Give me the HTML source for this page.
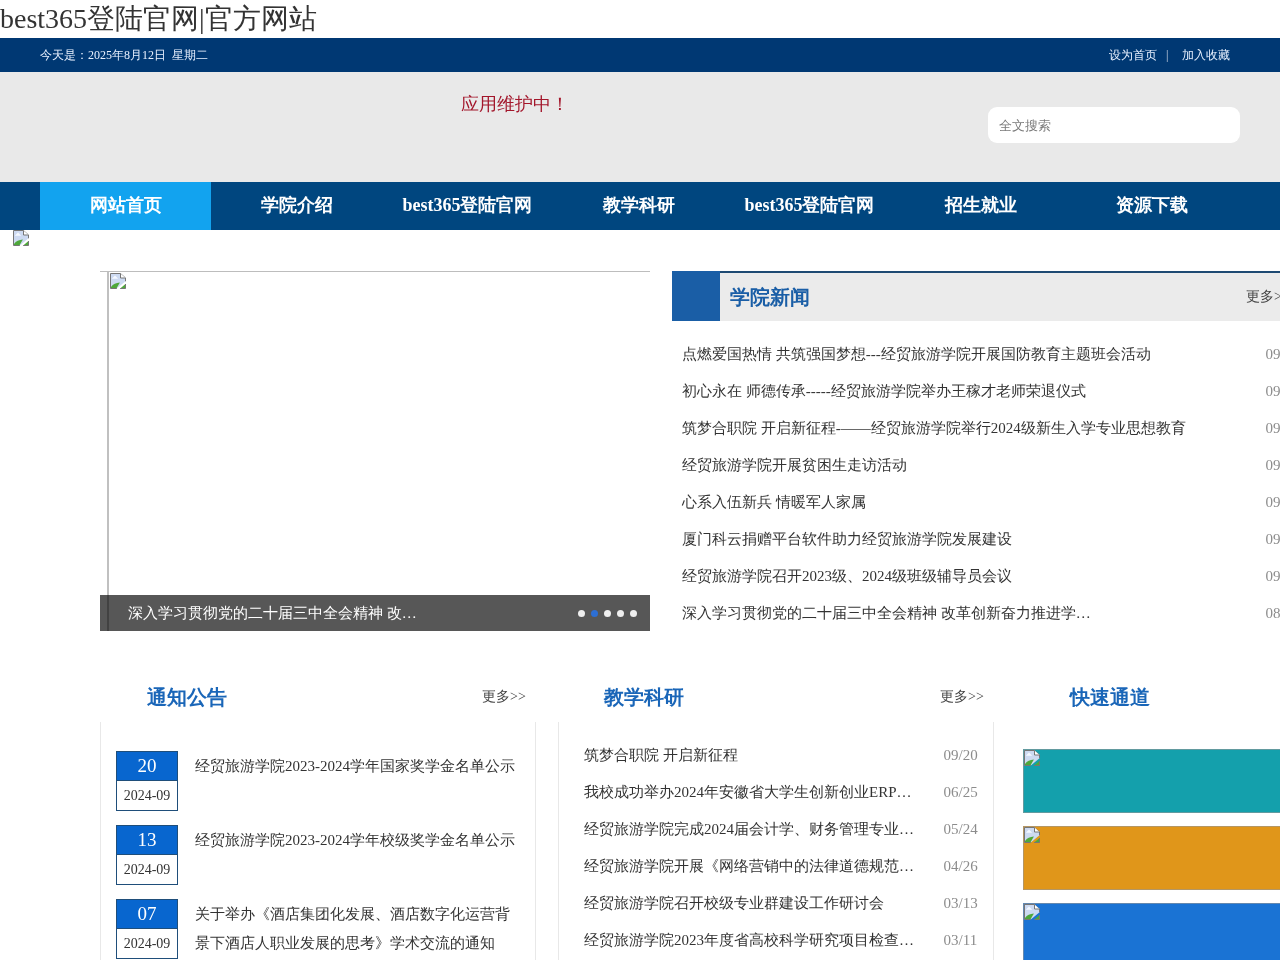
<!DOCTYPE html>
<html><head><meta charset="utf-8">
<style>
*{margin:0;padding:0;box-sizing:border-box}
html,body{width:1280px;height:960px;overflow:hidden;background:#fff}body{will-change:transform}
body{font-family:"Liberation Serif",serif;color:#333;position:relative}
.abs{position:absolute}
.title{left:0;top:0;font-size:28px;line-height:38px;color:#333;white-space:nowrap}
.topbar{left:0;top:38px;width:1280px;height:34px;background:#003873}
.topbar .l{position:absolute;left:40px;top:0;line-height:34px;font-size:12px;color:#e8f1ff}
.topbar .r{position:absolute;right:50px;top:0;line-height:34px;font-size:12px;color:#e8f1ff}
.head{left:0;top:72px;width:1280px;height:110px;background:#e9e9e9}
.maint{left:461px;top:92px;font-size:18px;line-height:24px;color:#a3162b}
.search{left:988px;top:107px;width:252px;height:36px;background:#fff;border-radius:9px}
.search span{position:absolute;left:11px;top:1px;line-height:36px;font-size:13px;color:#7a7a7a}
.nav{left:0;top:182px;width:1280px;height:48px;background:#00467f}
.nav a{position:absolute;top:0;height:48px;width:171px;line-height:47px;text-align:center;color:#fff;font-size:18px;font-weight:bold;text-decoration:none}
.nav a.on{background:#12a3ef}

.bimg{position:absolute;width:16px;height:16px}
.sl-top{left:100px;top:271px;width:550px;height:1px;background:#bdbdbd}
.sl-vl{left:107px;top:272px;width:2px;height:359px;background:#c0c0c0}
.cap{left:100px;top:595px;width:550px;height:36px;background:rgba(0,0,0,.66)}
.cap span{position:absolute;left:28px;top:0;line-height:36px;font-size:15px;color:#fff;white-space:nowrap}
.dot{position:absolute;top:15px;width:7px;height:7px;border-radius:50%;background:#efefef}
.nh{left:672px;top:271px;width:608px;height:50px;background:#ebebeb;border-top:2px solid #1e4a73}
.nh .sq{position:absolute;left:0;top:-2px;width:48px;height:50px;background:#1a5ea6}
.nh .t{position:absolute;left:58px;top:0;line-height:48px;font-size:20px;font-weight:bold;color:#1a5ea6}
.nh .m{position:absolute;left:574px;top:0;line-height:48px;font-size:14px;color:#444;white-space:nowrap}
.nl{left:682px;top:336px;width:600px}
.nl li{list-style:none;height:37px;line-height:37px;font-size:15px;color:#333;white-space:nowrap;position:relative}
.nl li i{font-style:normal;position:absolute;left:583.5px;top:0;color:#8c8c8c}
.st{position:absolute;font-size:20px;font-weight:bold;color:#1a66b8;line-height:30px;white-space:nowrap}
.more{position:absolute;font-size:14px;color:#444;line-height:20px;white-space:nowrap}
.bx{position:absolute;top:722px;height:260px;border-left:1px solid #e8e8e8;border-right:1px solid #e8e8e8}
.db{position:absolute;left:116px;width:62px;height:60px;border:1px solid #1f4e7a;background:#fff}
.db .d{height:29px;background:#0866cf;color:#fff;font-size:19px;line-height:27px;text-align:center;border-bottom:1px solid #1f4e7a}
.db .y{font-size:14px;line-height:30px;text-align:center;color:#333}
.nt{position:absolute;left:195px;width:320px;font-size:15px;line-height:29px;padding-top:1px;color:#333}
.rl{left:584px;top:737px;width:400px}
.rl li{list-style:none;height:37px;line-height:37px;font-size:15px;color:#333;white-space:nowrap;position:relative}
.rl li i{font-style:normal;position:absolute;left:359.6px;top:0;color:#8c8c8c}
.qk{position:absolute;left:1023px;width:300px;height:64px;border:1px solid rgba(150,150,150,.6)}
</style></head><body>
<div class="abs title">best365登陆官网|官方网站</div>
<div class="abs topbar"><div class="l">今天是：2025年8月12日&nbsp; 星期二</div><div class="r" style="right:auto;left:1109px">设为首页</div><div class="r" style="right:auto;left:1166px;color:#cfd8e6">|</div><div class="r" style="right:auto;left:1182px">加入收藏</div></div>
<div class="abs head"></div>
<div class="abs maint">应用维护中！</div>
<div class="abs search"><span>全文搜索</span></div>
<div class="abs nav">
<a class="on" style="left:40px">网站首页</a>
<a style="left:211px">学院介绍</a>
<a style="left:382px">best365登陆官网</a>
<a style="left:553px">教学科研</a>
<a style="left:724px">best365登陆官网</a>
<a style="left:895px">招生就业</a>
<a style="left:1066px">资源下载</a>
</div>

<svg class="bimg" style="left:13px;top:230px" viewBox="0 0 16 16"><path d="M0.5 0.5H10.5L15.5 5V8.3L6.8 15.5H0.5Z" fill="#cddaf2"/><path d="M1.8 5.8L5 2.6L8.2 5.8Z" fill="#f4f8ff"/><path d="M1 15.5V14C3 11 6 9.8 9.9 9.5L6.4 15.5Z" fill="#4ea83a"/><path d="M6.8 15.5H0.5V0.5H10.5L15.5 5V8.3" fill="none" stroke="#767676"/><path d="M10.5 0.5V5H15.5" fill="#fff" stroke="#767676"/><path d="M15.5 11V15.5H10.2Z" fill="#4ea83a"/><path d="M15.5 11V15.5H10.2" fill="none" stroke="#767676"/></svg>
<div class="abs sl-top"></div>
<div class="abs sl-vl"></div>
<svg class="bimg" style="left:110px;top:273px" viewBox="0 0 16 16"><path d="M0.5 0.5H10.5L15.5 5V8.3L6.8 15.5H0.5Z" fill="#cddaf2"/><path d="M1.8 5.8L5 2.6L8.2 5.8Z" fill="#f4f8ff"/><path d="M1 15.5V14C3 11 6 9.8 9.9 9.5L6.4 15.5Z" fill="#4ea83a"/><path d="M6.8 15.5H0.5V0.5H10.5L15.5 5V8.3" fill="none" stroke="#767676"/><path d="M10.5 0.5V5H15.5" fill="#fff" stroke="#767676"/><path d="M15.5 11V15.5H10.2Z" fill="#4ea83a"/><path d="M15.5 11V15.5H10.2" fill="none" stroke="#767676"/></svg>
<div class="abs cap"><span>深入学习贯彻党的二十届三中全会精神 改…</span>
<b class="dot" style="left:478px"></b><b class="dot" style="left:491px;background:#2d6fd4"></b><b class="dot" style="left:504px"></b><b class="dot" style="left:517px"></b><b class="dot" style="left:530px"></b></div>
<div class="abs nh"><div class="sq"></div><div class="t">学院新闻</div><div class="m">更多&gt;&gt;</div></div>
<ul class="abs nl">
<li>点燃爱国热情 共筑强国梦想---经贸旅游学院开展国防教育主题班会活动<i>09-29</i></li>
<li>初心永在 师德传承-----经贸旅游学院举办王稼才老师荣退仪式<i>09-26</i></li>
<li>筑梦合职院 开启新征程-——经贸旅游学院举行2024级新生入学专业思想教育<i>09-20</i></li>
<li>经贸旅游学院开展贫困生走访活动<i>09-18</i></li>
<li>心系入伍新兵 情暖军人家属<i>09-14</i></li>
<li>厦门科云捐赠平台软件助力经贸旅游学院发展建设<i>09-10</i></li>
<li>经贸旅游学院召开2023级、2024级班级辅导员会议<i>09-05</i></li>
<li>深入学习贯彻党的二十届三中全会精神 改革创新奋力推进学…<i>08-30</i></li>
</ul>
<div class="st" style="left:147px;top:682px">通知公告</div>
<div class="more" style="left:482px;top:687px">更多&gt;&gt;</div>
<div class="bx" style="left:100px;width:436px"></div>
<div class="db" style="top:751px"><div class="d">20</div><div class="y">2024-09</div></div>
<div class="nt" style="top:751px">经贸旅游学院2023-2024学年国家奖学金名单公示</div>
<div class="db" style="top:825px"><div class="d">13</div><div class="y">2024-09</div></div>
<div class="nt" style="top:825px">经贸旅游学院2023-2024学年校级奖学金名单公示</div>
<div class="db" style="top:899px"><div class="d">07</div><div class="y">2024-09</div></div>
<div class="nt" style="top:899px">关于举办《酒店集团化发展、酒店数字化运营背景下酒店人职业发展的思考》学术交流的通知</div>
<div class="st" style="left:604px;top:682px">教学科研</div>
<div class="more" style="left:940px;top:687px">更多&gt;&gt;</div>
<div class="bx" style="left:558px;width:436px"></div>
<ul class="abs rl">
<li>筑梦合职院 开启新征程<i>09/20</i></li>
<li>我校成功举办2024年安徽省大学生创新创业ERP…<i>06/25</i></li>
<li>经贸旅游学院完成2024届会计学、财务管理专业…<i>05/24</i></li>
<li>经贸旅游学院开展《网络营销中的法律道德规范…<i>04/26</i></li>
<li>经贸旅游学院召开校级专业群建设工作研讨会<i>03/13</i></li>
<li>经贸旅游学院2023年度省高校科学研究项目检查…<i>03/11</i></li>
</ul>
<div class="st" style="left:1070px;top:682px">快速通道</div>
<div class="qk" style="top:749px;background:#14a0ac"></div>
<div class="qk" style="top:826px;background:#e0961a"></div>
<div class="qk" style="top:903px;background:#1a73d4"></div>
<svg class="bimg" style="left:1024px;top:750px" viewBox="0 0 16 16"><path d="M0.5 0.5H10.5L15.5 5V8.3L6.8 15.5H0.5Z" fill="#cddaf2"/><path d="M1.8 5.8L5 2.6L8.2 5.8Z" fill="#f4f8ff"/><path d="M1 15.5V14C3 11 6 9.8 9.9 9.5L6.4 15.5Z" fill="#4ea83a"/><path d="M6.8 15.5H0.5V0.5H10.5L15.5 5V8.3" fill="none" stroke="#767676"/><path d="M10.5 0.5V5H15.5" fill="#fff" stroke="#767676"/><path d="M15.5 11V15.5H10.2Z" fill="#4ea83a"/><path d="M15.5 11V15.5H10.2" fill="none" stroke="#767676"/></svg>
<svg class="bimg" style="left:1024px;top:827px" viewBox="0 0 16 16"><path d="M0.5 0.5H10.5L15.5 5V8.3L6.8 15.5H0.5Z" fill="#cddaf2"/><path d="M1.8 5.8L5 2.6L8.2 5.8Z" fill="#f4f8ff"/><path d="M1 15.5V14C3 11 6 9.8 9.9 9.5L6.4 15.5Z" fill="#4ea83a"/><path d="M6.8 15.5H0.5V0.5H10.5L15.5 5V8.3" fill="none" stroke="#767676"/><path d="M10.5 0.5V5H15.5" fill="#fff" stroke="#767676"/><path d="M15.5 11V15.5H10.2Z" fill="#4ea83a"/><path d="M15.5 11V15.5H10.2" fill="none" stroke="#767676"/></svg>
<svg class="bimg" style="left:1024px;top:904px" viewBox="0 0 16 16"><path d="M0.5 0.5H10.5L15.5 5V8.3L6.8 15.5H0.5Z" fill="#cddaf2"/><path d="M1.8 5.8L5 2.6L8.2 5.8Z" fill="#f4f8ff"/><path d="M1 15.5V14C3 11 6 9.8 9.9 9.5L6.4 15.5Z" fill="#4ea83a"/><path d="M6.8 15.5H0.5V0.5H10.5L15.5 5V8.3" fill="none" stroke="#767676"/><path d="M10.5 0.5V5H15.5" fill="#fff" stroke="#767676"/><path d="M15.5 11V15.5H10.2Z" fill="#4ea83a"/><path d="M15.5 11V15.5H10.2" fill="none" stroke="#767676"/></svg>
</body></html>
